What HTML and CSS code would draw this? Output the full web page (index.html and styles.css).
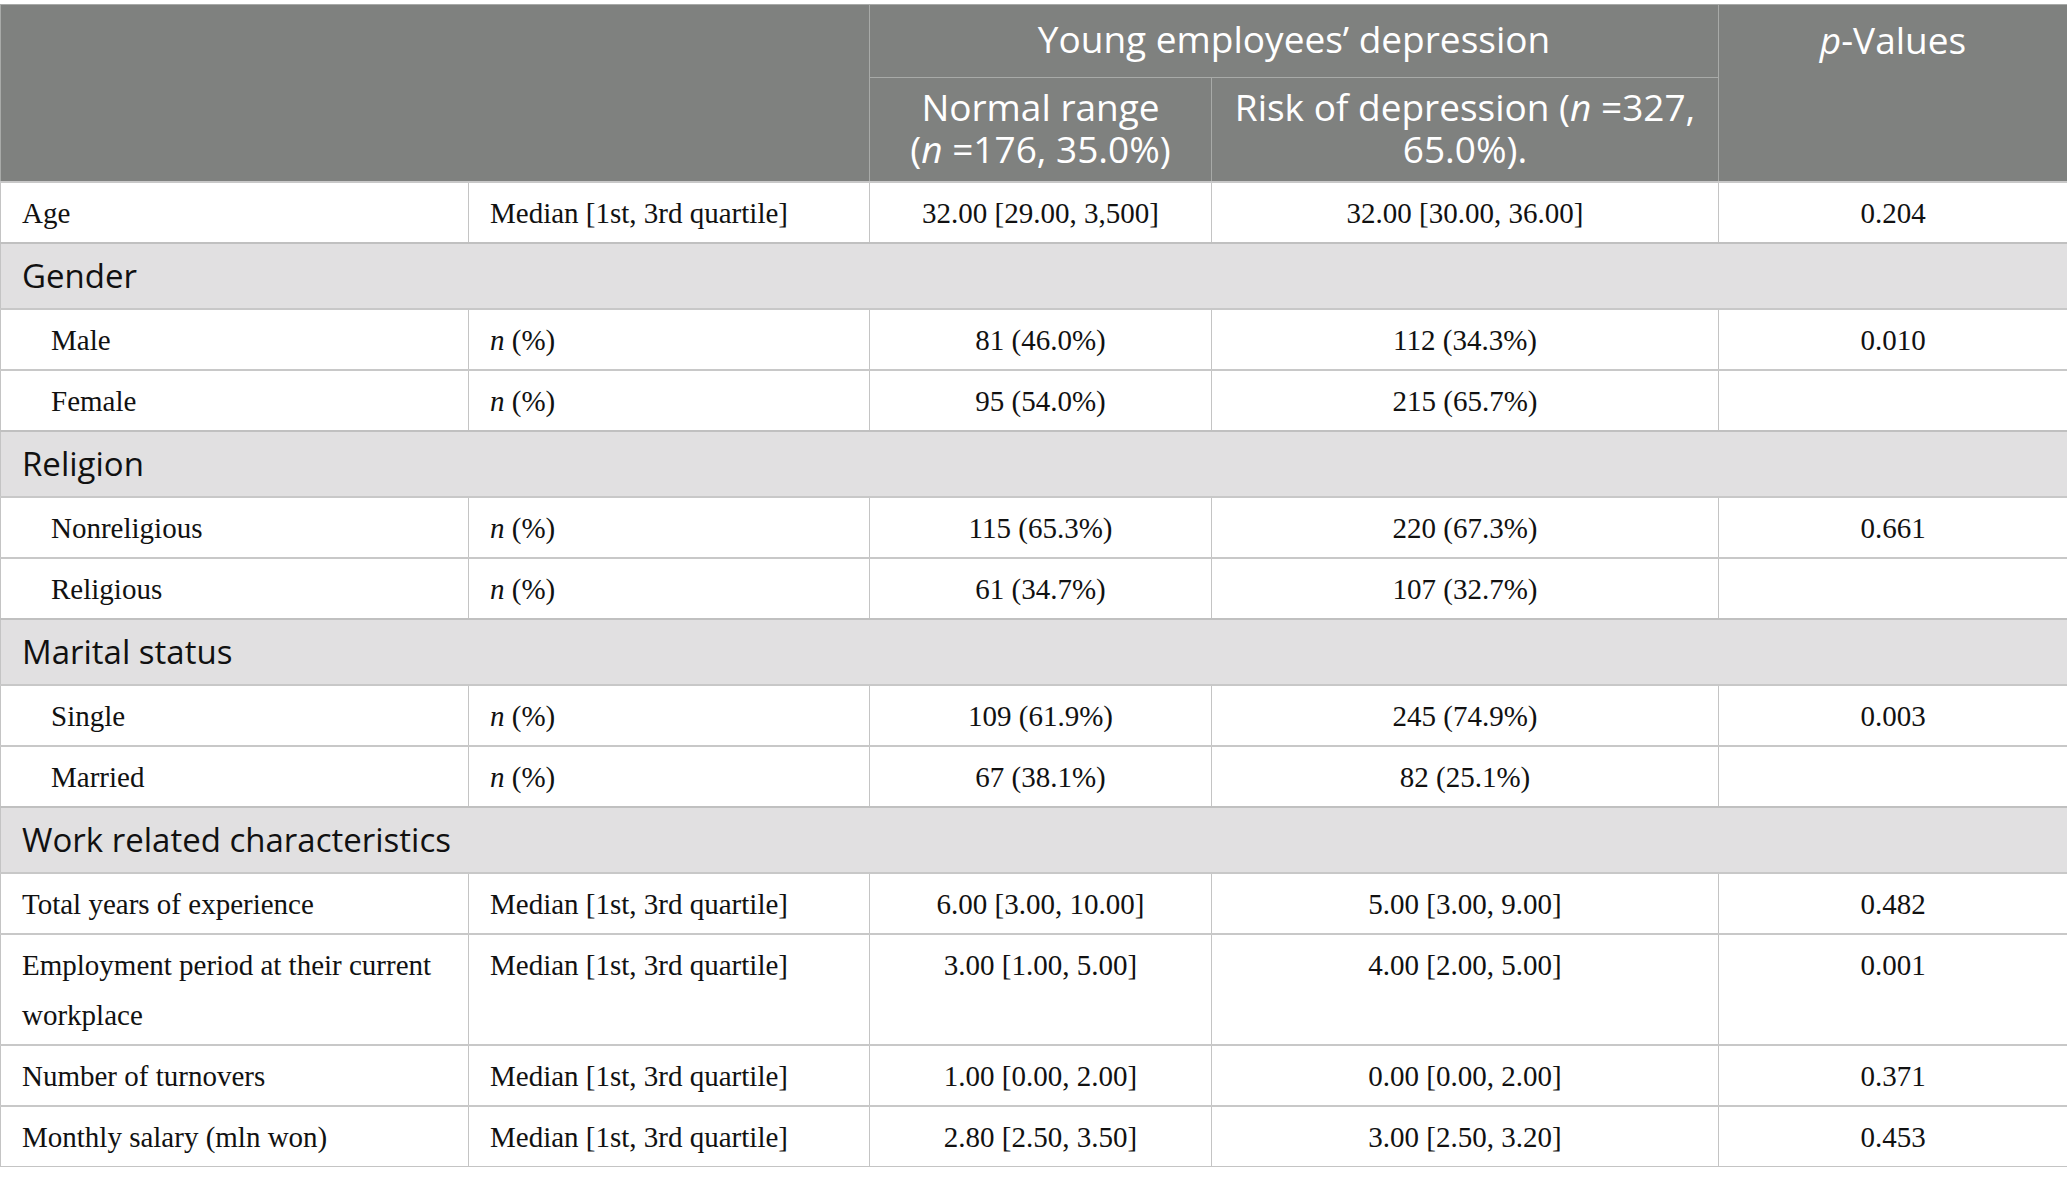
FILE: index.html
```html
<!DOCTYPE html>
<html>
<head>
<meta charset="utf-8">
<link rel="stylesheet" href="styles.css">
</head>
<body>
<table class="tbl">
  <colgroup>
    <col class="c1"><col class="c2"><col class="c3"><col class="c4"><col class="c5">
  </colgroup>
  <thead>
    <tr class="h1">
      <th colspan="2" rowspan="2" class="blank"></th>
      <th colspan="2" class="grp">Young employees’ depression</th>
      <th rowspan="2" class="pv"><i>p</i>-Values</th>
    </tr>
    <tr class="h2">
      <th class="sub">Normal range<br>(<i>n</i> =176, 35.0%)</th>
      <th class="sub">Risk of depression (<i>n</i> =327,<br>65.0%).</th>
    </tr>
  </thead>
  <tbody>
    <tr class="row"><td>Age</td><td>Median [1st, 3rd quartile]</td><td class="ctr">32.00 [29.00, 3,500]</td><td class="ctr">32.00 [30.00, 36.00]</td><td class="ctr">0.204</td></tr>
    <tr class="sec"><td colspan="5">Gender</td></tr>
    <tr class="row"><td class="ind">Male</td><td><i>n</i> (%)</td><td class="ctr">81 (46.0%)</td><td class="ctr">112 (34.3%)</td><td class="ctr">0.010</td></tr>
    <tr class="row"><td class="ind">Female</td><td><i>n</i> (%)</td><td class="ctr">95 (54.0%)</td><td class="ctr">215 (65.7%)</td><td class="ctr"></td></tr>
    <tr class="sec"><td colspan="5">Religion</td></tr>
    <tr class="row"><td class="ind">Nonreligious</td><td><i>n</i> (%)</td><td class="ctr">115 (65.3%)</td><td class="ctr">220 (67.3%)</td><td class="ctr">0.661</td></tr>
    <tr class="row"><td class="ind">Religious</td><td><i>n</i> (%)</td><td class="ctr">61 (34.7%)</td><td class="ctr">107 (32.7%)</td><td class="ctr"></td></tr>
    <tr class="sec"><td colspan="5">Marital status</td></tr>
    <tr class="row"><td class="ind">Single</td><td><i>n</i> (%)</td><td class="ctr">109 (61.9%)</td><td class="ctr">245 (74.9%)</td><td class="ctr">0.003</td></tr>
    <tr class="row"><td class="ind">Married</td><td><i>n</i> (%)</td><td class="ctr">67 (38.1%)</td><td class="ctr">82 (25.1%)</td><td class="ctr"></td></tr>
    <tr class="sec"><td colspan="5">Work related characteristics</td></tr>
    <tr class="row"><td>Total years of experience</td><td>Median [1st, 3rd quartile]</td><td class="ctr">6.00 [3.00, 10.00]</td><td class="ctr">5.00 [3.00, 9.00]</td><td class="ctr">0.482</td></tr>
    <tr class="row"><td>Employment period at their current workplace</td><td>Median [1st, 3rd quartile]</td><td class="ctr">3.00 [1.00, 5.00]</td><td class="ctr">4.00 [2.00, 5.00]</td><td class="ctr">0.001</td></tr>
    <tr class="row"><td>Number of turnovers</td><td>Median [1st, 3rd quartile]</td><td class="ctr">1.00 [0.00, 2.00]</td><td class="ctr">0.00 [0.00, 2.00]</td><td class="ctr">0.371</td></tr>
    <tr class="row"><td>Monthly salary (mln won)</td><td>Median [1st, 3rd quartile]</td><td class="ctr">2.80 [2.50, 3.50]</td><td class="ctr">3.00 [2.50, 3.20]</td><td class="ctr">0.453</td></tr>
  </tbody>
</table>
</body>
</html>
```
FILE: styles.css
```css
html, body {
  margin: 0;
  padding: 0;
  background: #ffffff;
}
body {
  padding-top: 4px;
}
.tbl {
  width: 2067px;
  border-collapse: collapse;
  table-layout: fixed;
  font-family: "Liberation Serif", "Times New Roman", serif;
  color: #111;
  border: 1px solid #bdbdbd;
}
.c1 { width: 468px; }
.c2 { width: 401px; }
.c3 { width: 342px; }
.c4 { width: 507px; }
.c5 { width: 349px; }

thead th {
  background: #7f817f;
  color: #ffffff;
  font-family: "Open Sans", "Noto Sans", sans-serif;
  font-weight: normal;
  font-size: 37px;
  line-height: 42px;
  text-align: center;
  border: 1px solid #a8aaa8;
  padding: 0 14px;
}
.h1 th { height: 68px; }
.h1 th.grp { padding-top: 0; padding-bottom: 4px; }
.h1 th.pv { vertical-align: top; padding-top: 14px; }
.h2 th { height: 99px; padding-bottom: 4px; }

td {
  font-size: 29px;
  line-height: 50px;
  padding: 5px 21px 4px 21px;
  vertical-align: top;
  border: 1px solid #c4c4c4;
  border-top: 2px solid #c8c8c8;
}
td.ctr { text-align: center; }
td.ind { padding-left: 50px; }

.sec td {
  background: #e1e0e1;
  font-family: "Open Sans", "Noto Sans", sans-serif;
  font-size: 33px;
  line-height: 42px;
  padding: 11px 21px 11px 21px;
  color: #111;
  vertical-align: middle;
  border-top: 2px solid #c0c0c0;
}
```
